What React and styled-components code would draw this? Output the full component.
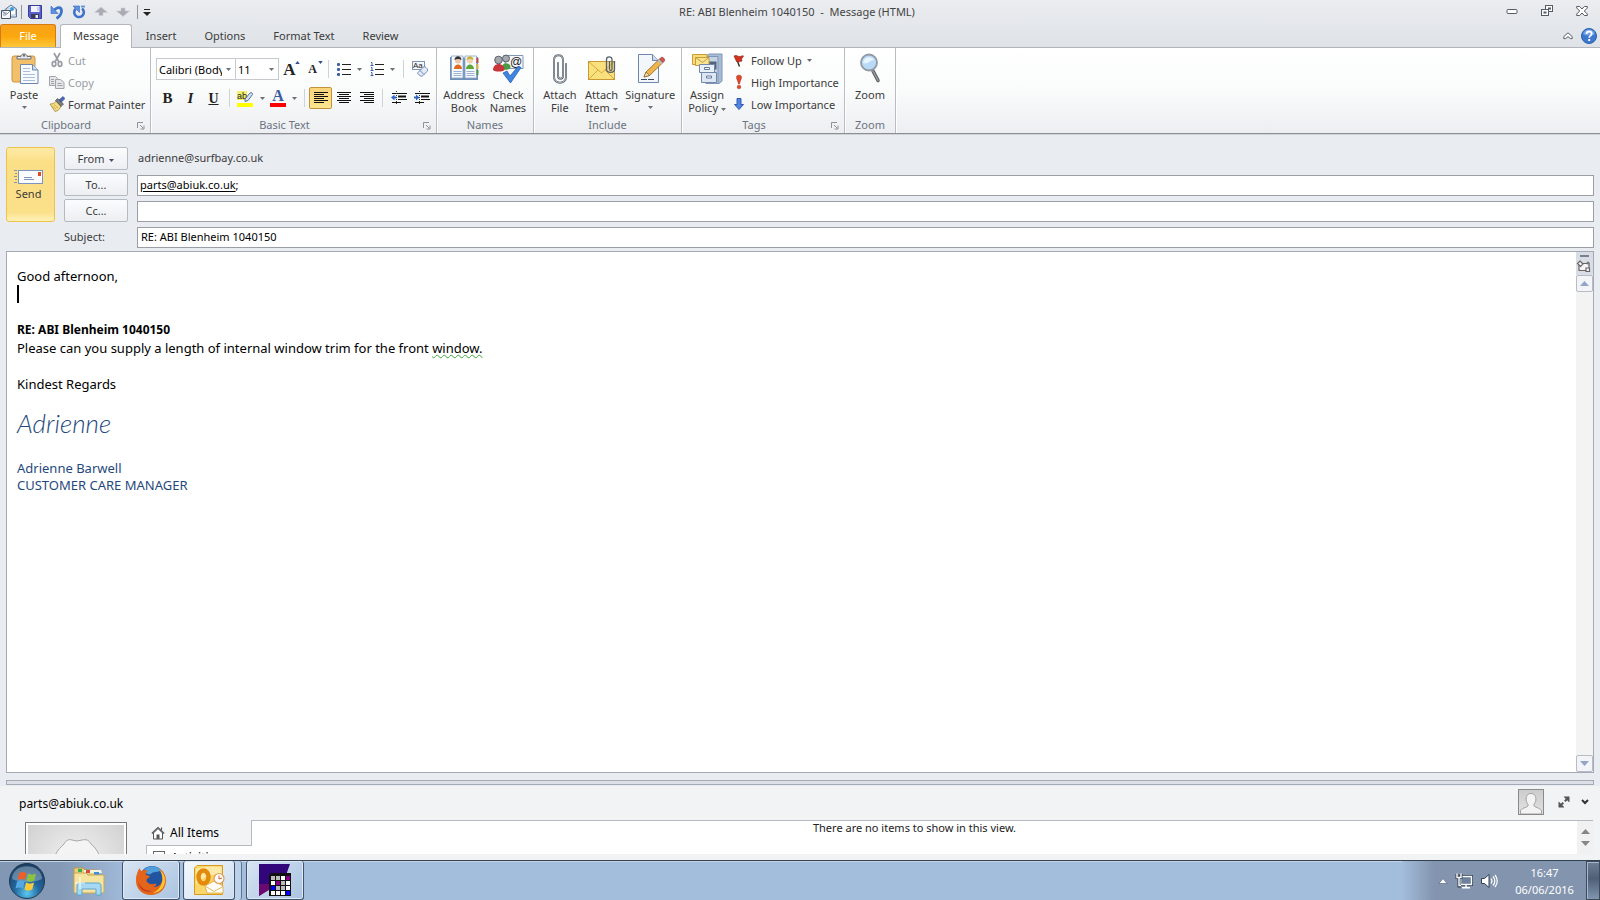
import React from "react";
import styled, { createGlobalStyle } from "styled-components";

export default function App() {
  return (
    <>
      <GlobalStyle />
      <Window>
        <TitleBar />
        <Tabs />
        <Ribbon />
        <MessageHeader />
        <MessageBody />
        <Splitter />
        <PeoplePane />
        <Taskbar />
      </Window>
    </>
  );
}

/* ---------- title bar ---------- */

function TitleBar() {
  return (
    <StyledTitleBar>
      <QuickAccess>
        <QuickButton aria-label="Message menu">
          <MailIcon />
        </QuickButton>
        <QuickDivider />
        <QuickButton aria-label="Save">
          <SaveIcon />
        </QuickButton>
        <QuickButton aria-label="Undo">
          <UndoIcon />
        </QuickButton>
        <QuickButton aria-label="Repeat">
          <RepeatIcon />
        </QuickButton>
        <QuickButton aria-label="Previous item">
          <NavArrowIcon />
        </QuickButton>
        <QuickButton aria-label="Next item">
          <NavArrowIcon down />
        </QuickButton>
        <QuickDivider />
        <QuickButton aria-label="Customise" $narrow>
          <svg width="8" height="8" viewBox="0 0 8 8">
            <path d="M1 1.500h6" stroke="#222" />
            <path d="M0 4h8L4 8z" fill="#222" />
          </svg>
        </QuickButton>
      </QuickAccess>
      <WindowTitle>RE: ABI Blenheim 1040150&nbsp; -&nbsp; Message (HTML)</WindowTitle>
      <WindowControls>
        <WindowButton aria-label="Minimise">
          <svg width="12" height="12" viewBox="0 0 12 12">
            <rect x="1" y="4.500" width="10" height="4" rx="1" fill="#fff" stroke="#565b6b" />
          </svg>
        </WindowButton>
        <WindowButton aria-label="Restore">
          <svg width="12" height="12" viewBox="0 0 12 12" fill="#fff" stroke="#565b6b">
            <rect x="4.500" y=".5" width="7" height="6" />
            <rect x="7.500" y="3" width="2" height="1" />
            <rect x=".5" y="4.500" width="7" height="6" />
            <rect x="3" y="7" width="2" height="1" />
          </svg>
        </WindowButton>
        <WindowButton aria-label="Close">
          <svg width="12" height="12" viewBox="0 0 12 12" strokeLinejoin="round">
            <path
              d="M.7 1.500h3L6 4l2.300-2.500h3v1.500L8.300 6l3 3v1.500h-3L6 8l-2.300 2.500h-3V9l3-3-3-3z"
              fill="#fff"
              stroke="#565b6b"
            />
          </svg>
        </WindowButton>
      </WindowControls>
    </StyledTitleBar>
  );
}

function Tabs() {
  return (
    <StyledTabs>
      <FileTab>File</FileTab>
      <Tab $active>Message</Tab>
      <Tab>Insert</Tab>
      <Tab>Options</Tab>
      <Tab>Format Text</Tab>
      <Tab>Review</Tab>
      <TabTools>
        <ToolLink aria-label="Collapse ribbon">
          <svg width="10" height="8" viewBox="0 0 10 8">
            <path
              d="M5 .8L9.200 4.600v2h-1.800L5 4.600 2.600 6.600H.8v-2z"
              fill="#fff"
              stroke="#565b6b"
              strokeLinejoin="round"
            />
          </svg>
        </ToolLink>
        <ToolLink aria-label="Help">
          <svg width="16" height="16" viewBox="0 0 16 16">
            <circle cx="8" cy="8" r="7.500" fill="#3d78cf" stroke="#2c5fae" />
            <path d="M2 6a6.300 6.300 0 0 1 12 0c-3 2-9 2-12 0z" fill="#6fa2e6" />
            <path
              d="M5.500 6c0-3.400 5.200-3.200 5.200-.2 0 1.700-2.500 1.900-2.500 3.900"
              fill="none"
              stroke="#fff"
              strokeWidth="1.800"
            />
            <rect x="7.200" y="11" width="2" height="2" fill="#fff" />
          </svg>
        </ToolLink>
      </TabTools>
    </StyledTabs>
  );
}

/* ---------- ribbon ---------- */

function Ribbon() {
  return (
    <StyledRibbon>
      <Group label="Clipboard" width={151} launcher>
        <BigButton $width={48}>
          <PasteIcon />
          <BigLabel>Paste</BigLabel>
          <Caret />
        </BigButton>
        <SmallColumn>
          <SmallButton disabled>
            <CutIcon />
            Cut
          </SmallButton>
          <SmallButton disabled>
            <CopyIcon />
            Copy
          </SmallButton>
          <SmallButton>
            <BrushIcon />
            Format Painter
          </SmallButton>
        </SmallColumn>
      </Group>

      <Group label="Basic Text" width={286} launcher>
        <TextTools>
          <ToolRow>
            <ComboBox $width={80}>
              <select aria-label="Font" defaultValue="body">
                <option value="body">Calibri (Body)</option>
              </select>
              <Caret />
            </ComboBox>
            <ComboBox $width={44}>
              <select aria-label="Font size" defaultValue="11">
                <option value="11">11</option>
              </select>
              <Caret />
            </ComboBox>
            <Tool aria-label="Grow font">
              <Letter $size={17}>A</Letter>
              <SizeMark />
            </Tool>
            <Tool aria-label="Shrink font">
              <Letter $size={12}>A</Letter>
              <SizeMark down />
            </Tool>
            <ToolDivider />
            <Tool aria-label="Bullets" $split>
              <ListIcon />
              <Caret />
            </Tool>
            <Tool aria-label="Numbering" $split>
              <ListIcon numbered />
              <Caret />
            </Tool>
            <ToolDivider />
            <Tool aria-label="Clear formatting">
              <ClearIcon />
            </Tool>
          </ToolRow>
          <ToolRow>
            <Tool aria-label="Bold">
              <Letter $size={15}>B</Letter>
            </Tool>
            <Tool aria-label="Italic">
              <Letter $size={15} $italic>
                I
              </Letter>
            </Tool>
            <Tool aria-label="Underline">
              <Letter $size={14} $underline>
                U
              </Letter>
            </Tool>
            <ToolDivider />
            <Tool aria-label="Highlight" $split>
              <HighlightIcon />
              <Caret />
            </Tool>
            <Tool aria-label="Font colour" $split>
              <FontColour>
                <Letter $size={16} $blue>
                  A
                </Letter>
              </FontColour>
              <Caret />
            </Tool>
            <ToolDivider />
            <Tool aria-label="Align left" $pressed>
              <AlignIcon align="left" />
            </Tool>
            <Tool aria-label="Centre">
              <AlignIcon align="center" />
            </Tool>
            <Tool aria-label="Align right">
              <AlignIcon align="right" />
            </Tool>
            <ToolDivider />
            <Tool aria-label="Decrease indent">
              <IndentIcon />
            </Tool>
            <Tool aria-label="Increase indent">
              <IndentIcon increase />
            </Tool>
          </ToolRow>
        </TextTools>
      </Group>

      <Group label="Names" width={97}>
        <BigButton $width={44}>
          <AddressBookIcon />
          <BigLabel>Address Book</BigLabel>
        </BigButton>
        <BigButton $width={44}>
          <CheckNamesIcon />
          <BigLabel>Check Names</BigLabel>
        </BigButton>
      </Group>

      <Group label="Include" width={148}>
        <BigButton $width={42}>
          <PaperclipIcon />
          <BigLabel>Attach File</BigLabel>
        </BigButton>
        <BigButton $width={42}>
          <AttachItemIcon />
          <BigLabel>
            Attach Item <Caret />
          </BigLabel>
        </BigButton>
        <BigButton $width={56}>
          <SignatureIcon />
          <BigLabel>Signature</BigLabel>
          <Caret />
        </BigButton>
      </Group>

      <Group label="Tags" width={163} launcher>
        <BigButton $width={46}>
          <PolicyIcon />
          <BigLabel>
            Assign Policy <Caret />
          </BigLabel>
        </BigButton>
        <SmallColumn>
          <SmallButton>
            <FlagIcon />
            Follow Up <Caret />
          </SmallButton>
          <SmallButton>
            <HighIcon />
            High Importance
          </SmallButton>
          <SmallButton>
            <LowIcon />
            Low Importance
          </SmallButton>
        </SmallColumn>
      </Group>

      <Group label="Zoom" width={51}>
        <BigButton $width={46}>
          <MagnifierIcon />
          <BigLabel>Zoom</BigLabel>
        </BigButton>
      </Group>
    </StyledRibbon>
  );
}

function Group({ label, width, launcher, children }) {
  return (
    <StyledGroup $width={width}>
      <GroupContent>{children}</GroupContent>
      <GroupFooter>
        <GroupLabel>{label}</GroupLabel>
        {launcher && (
          <Launcher aria-label={`${label} options`}>
            <svg width="8" height="8" viewBox="0 0 8 8" fill="none" stroke="#8d939c">
              <path d="M.5 6V.5H6M3 3l3.500 3.500M7 3.500V7H3.500" />
            </svg>
          </Launcher>
        )}
      </GroupFooter>
    </StyledGroup>
  );
}

/* ---------- message ---------- */

function MessageHeader() {
  return (
    <StyledHeader>
      <SendButton>
        <SendIcon />
        Send
      </SendButton>
      <Fields>
        <FieldButton>
          From <Caret />
        </FieldButton>
        <FromAddress>adrienne@surfbay.co.uk</FromAddress>

        <FieldButton>To...</FieldButton>
        <RecipientBox>
          <a href="mailto:parts@abiuk.co.uk">parts@abiuk.co.uk</a>;
          <input aria-label="To" />
        </RecipientBox>

        <FieldButton>Cc...</FieldButton>
        <RecipientBox>
          <input aria-label="Cc" />
        </RecipientBox>

        <SubjectLabel htmlFor="subject">Subject:</SubjectLabel>
        <SubjectInput id="subject" defaultValue="RE: ABI Blenheim 1040150" />
      </Fields>
    </StyledHeader>
  );
}

function MessageBody() {
  return (
    <StyledBody>
      <Letterhead>
        <p>Good afternoon,</p>
        <p>
          <TextCursor />
        </p>
        <p>&nbsp;</p>
        <Heading>RE: ABI Blenheim 1040150</Heading>
        <p>
          Please can you supply a length of internal window trim for the front <Grammar>window.</Grammar>
        </p>
        <p>&nbsp;</p>
        <p>Kindest Regards</p>
        <Autograph>Adrienne</Autograph>
        <Signatory>
          Adrienne Barwell
          <br />
          CUSTOMER CARE MANAGER
        </Signatory>
      </Letterhead>
      <Scrollbar>
        <RulerToggle aria-label="Select browse object">
          <svg width="16" height="20" viewBox="0 0 16 20">
            <rect x="4" y="1" width="9" height="2" fill="#7b828c" />
            <g fill="#f8f4f8" stroke="#666" strokeWidth="1.200">
              <path d="M3 9.500h10v7H3z" />
              <path d="M4 7l3 3-2.500 2.500-3-3zM10 14h3.500v3.500H10z" />
            </g>
            <circle cx="12" cy="9" r="1.500" fill="#777" />
          </svg>
        </RulerToggle>
        <ScrollButton aria-label="Scroll up">
          <Triangle up />
        </ScrollButton>
        <ScrollTrack />
        <ScrollButton aria-label="Scroll down">
          <Triangle />
        </ScrollButton>
      </Scrollbar>
    </StyledBody>
  );
}

function PeoplePane() {
  return (
    <StyledPeople>
      <PeopleBar>
        <PeopleName>parts@abiuk.co.uk</PeopleName>
        <Avatar aria-label="Contact">
          <svg width="24" height="24" viewBox="0 0 24 24">
            <path
              d="M1.500 24v-3c0-2.500 6-3.500 7.500-5v-2C6.500 12 7 8 7.500 6.500c1.500-4 7.500-4 9 0 .5 1.500 1 5.500-1.500 7.500v2c1.500 1.500 7.500 2.500 7.500 5v3z"
              fill="#f3f3f3"
              stroke="#a2a2a2"
            />
          </svg>
        </Avatar>
        <ToolLink aria-label="Open people pane">
          <svg width="12" height="12" viewBox="0 0 12 12" fill="#555" stroke="#555">
            <path d="M6 .8h5.200V6zM.8 6v5.200H6z" strokeWidth=".5" />
            <path d="M2.500 9.500l2.800-2.800M6.800 5.200l2.700-2.700" strokeWidth="2" />
          </svg>
        </ToolLink>
        <ToolLink aria-label="Collapse people pane">
          <svg width="8" height="8" viewBox="0 0 8 8">
            <path d="M1 2l3 3 3-3" fill="none" stroke="#333" strokeWidth="2" />
          </svg>
        </ToolLink>
      </PeopleBar>
      <PeopleContent>
        <PhotoColumn>
          <Photo>
            <svg width="96" height="96" viewBox="0 0 96 96">
              <path
                d="M24 42c1-10 5-17 12-23 2-4 5-5 8-4l5 1 5-1c4-1 7 0 9 4 6 5 9 10 11 23v50H24z"
                fill="#f4f4f4"
                stroke="#a8a8a8"
              />
            </svg>
          </Photo>
        </PhotoColumn>
        <PeopleTabs>
          <PeopleTab $active>
            <HomeIcon />
            All Items
          </PeopleTab>
          <PeopleTab>
            <svg width="14" height="14" viewBox="0 0 14 14">
              <rect x="1.500" y="1.500" width="11" height="11" fill="#fff" stroke="#666" />
            </svg>
            Activities
          </PeopleTab>
        </PeopleTabs>
        <PeopleItems>There are no items to show in this view.</PeopleItems>
        <PeopleScroll>
          <Triangle up grey />
          <Triangle grey />
        </PeopleScroll>
      </PeopleContent>
    </StyledPeople>
  );
}

/* ---------- taskbar ---------- */

function Taskbar() {
  return (
    <StyledTaskbar>
      <StartButton aria-label="Start">
        <StartIcon />
      </StartButton>
      <TaskButton aria-label="Explorer">
        <FolderIcon />
      </TaskButton>
      <TaskButton aria-label="Firefox" $open>
        <FirefoxIcon />
      </TaskButton>
      <TaskStack>
        <TaskButton aria-label="Outlook" $open $active>
          <OutlookIcon />
        </TaskButton>
      </TaskStack>
      <TaskButton aria-label="Program" $open>
        <GridAppIcon />
      </TaskButton>
      <Tray>
        <svg width="10" height="6" viewBox="0 0 10 6">
          <path d="M5 .5L9 5.500H1z" fill="#fff" stroke="#4d5c72" strokeWidth=".6" />
        </svg>
        <NetworkIcon />
        <SpeakerIcon />
        <Clock>
          <time>16:47</time>
          <span>06/06/2016</span>
        </Clock>
      </Tray>
      <ShowDesktop aria-label="Show desktop" />
    </StyledTaskbar>
  );
}

/* ---------- icons ---------- */

function Caret() {
  return (
    <StyledCaret width="5" height="3" viewBox="0 0 5 3">
      <path d="M0 0h5L2.500 3z" fill="currentColor" />
    </StyledCaret>
  );
}

function SizeMark({ down }) {
  return (
    <StyledSizeMark width="5" height="3" viewBox="0 0 6 4">
      <path d={down ? "M0 0h6L3 4z" : "M0 4h6L3 0z"} fill="#2f4f8f" />
    </StyledSizeMark>
  );
}

function Triangle({ up, grey }) {
  return (
    <svg width="9" height="5" viewBox="0 0 9 5">
      <path d={up ? "M0 5h9L4.500 0z" : "M0 0h9L4.500 5z"} fill={grey ? "#868686" : "#94a3c8"} />
    </svg>
  );
}

function MailIcon() {
  return (
    <svg width="16" height="16" viewBox="0 0 16 16" strokeLinejoin="round">
      <path d="M4 5.500L10 1l5.500 4v8H5z" fill="#e4ecf6" stroke="#5b7396" />
      <path d="M5.500 5h9v6h-9z" fill="#fff" stroke="#8ba0bd" strokeWidth=".6" />
      <circle cx="11" cy="5" r="2" fill="#3d9bd8" />
      <path d="M.5 6.500h9v8h-9z" fill="#f4f7fb" stroke="#47566d" />
      <path d="M2 9h4M2 11h3M.5 6.500l5 4 4-4" fill="none" stroke="#6e7f97" strokeWidth=".8" />
    </svg>
  );
}

function SaveIcon() {
  return (
    <svg width="16" height="16" viewBox="0 0 16 16">
      <path d="M1.500 1.500h13v13h-11l-2-2z" fill="#5a5fd0" stroke="#3a3c96" />
      <path d="M4 2h8.500v6H4z" fill="#f1f4fc" />
      <path d="M10 3h2v4h-2z" fill="#c8d2ee" />
      <path d="M4 10h8v4H4z" fill="#3b3f55" />
      <path d="M8.500 11h2.500v3H8.500z" fill="#eee" />
    </svg>
  );
}

function UndoIcon() {
  return (
    <svg width="16" height="16" viewBox="0 0 16 16">
      <path d="M5 6.500C8 2.500 12.500 2.500 12.500 7c0 3-2 5.500-5 7.500" fill="none" stroke="#3e73cc" strokeWidth="2.800" />
      <path d="M2 2v7.500h7z" fill="#5e92e0" stroke="#3568be" strokeWidth=".6" />
    </svg>
  );
}

function RepeatIcon() {
  return (
    <svg width="16" height="16" viewBox="0 0 16 16">
      <path d="M11 4.500a4.800 4.800 0 1 1-6.500.5" fill="none" stroke="#3e73cc" strokeWidth="2.600" />
      <path d="M2 2h6.500v6.500z" fill="#5e92e0" stroke="#3568be" strokeWidth=".6" />
      <path d="M10 2.500h4" stroke="#5e92e0" strokeWidth="1.800" />
    </svg>
  );
}

function NavArrowIcon({ down }) {
  return (
    <svg width="14" height="12" viewBox="0 0 14 12">
      <path
        d={down ? "M5 2h4v3h4.500L7 10.500.5 5H5z" : "M7 1l6.500 5.500H9v3H5v-3H.5z"}
        fill="#a9adb3"
        stroke="#c9ccd1"
        strokeWidth=".6"
      />
    </svg>
  );
}

function PasteIcon() {
  return (
    <svg width="32" height="32" viewBox="0 0 32 32">
      <rect x="4" y="3" width="23" height="26" rx="2" fill="#f2c06a" stroke="#c9964a" />
      <path d="M9 6V3.500h4c0-3.500 6-3.500 6 0h4V6z" fill="#e6e9ee" stroke="#6b7079" />
      <circle cx="16" cy="2.500" r="1.200" fill="#6b7079" />
      <path d="M12.500 11.500h12l5.500 5.500v13.500H12.500z" fill="#f7fafe" stroke="#6d86ad" />
      <path d="M24.500 11.500V17H30" fill="#cfdcef" stroke="#6d86ad" />
      <path d="M15 15.500h7M15 18.500h7M15 21.500h12M15 24.500h12M15 27.500h12" stroke="#a9bddb" />
    </svg>
  );
}

function CutIcon() {
  return (
    <svg width="16" height="16" viewBox="0 0 16 16" fill="none" stroke="#999da3">
      <path d="M5 1l5 9M11 1L6 10" strokeWidth="1.700" />
      <ellipse cx="5" cy="12" rx="1.800" ry="2.300" strokeWidth="1.700" />
      <ellipse cx="11" cy="12" rx="1.800" ry="2.300" strokeWidth="1.700" />
    </svg>
  );
}

function CopyIcon() {
  return (
    <svg width="16" height="16" viewBox="0 0 16 16" fill="#e4e6e9" stroke="#a0a4aa">
      <path d="M.5 2.500h6l2 2v7h-8z" />
      <path d="M6.500 5.500h5l3.500 3v6H6.500z" />
      <path d="M2 5.500h3M2 7.500h3M2 9.500h3M8.500 9.500h4M8.500 11.500h5" />
    </svg>
  );
}

function BrushIcon() {
  return (
    <svg width="16" height="16" viewBox="0 0 16 16">
      <path d="M1 8c3 0 5-1 6-3l5 5c-1 3-3 5-6 5.500z" fill="#f3dc84" stroke="#a98c3a" strokeWidth=".8" />
      <path d="M3 10l4 3M5 8.500l4 3.500" stroke="#c5a445" strokeWidth=".8" />
      <path d="M6.500 4.500l2-2 6 5.500-2.500 2.500z" fill="#7c7c80" stroke="#4b4b50" strokeWidth=".7" />
      <path d="M10 4l4-3.500 2 2L12.500 6z" fill="#4a67b5" stroke="#2f4788" strokeWidth=".6" />
    </svg>
  );
}

function ListIcon({ numbered }) {
  return (
    <svg width="14" height="14" viewBox="0 0 14 14">
      {[1, 6, 11].map((y) => (
        <React.Fragment key={y}>
          {numbered ? (
            <path d={`M1 ${y - 0.5}h1v2.500M.5 ${y + 2.5}h3`} fill="none" stroke="#3c5fa8" />
          ) : (
            <rect x="0" y={y} width="3" height="3" rx="1" fill="#3c5fa8" />
          )}
          <rect x="5" y={y + 1} width="9" height="1" fill="#222" />
        </React.Fragment>
      ))}
    </svg>
  );
}

function ClearIcon() {
  return (
    <svg width="18" height="18" viewBox="0 0 18 18">
      <rect x="1.500" y="1.500" width="12" height="8" fill="#f5f8fc" stroke="#7d94b8" />
      <text x="2" y="8" fontSize="8" fontFamily="Liberation Sans" fill="#222">
        Aa
      </text>
      <path
        d="M7 12.500l5-5c1-1 2-1 3 0l1 1c.8.8.8 2 0 3l-4 4c-1 1-2 1-3 0l-1.500-1c-1-.6-1-1.300-.5-2z"
        fill="#e3ebf7"
        stroke="#6f88b4"
      />
      <path d="M9 10.500l4 4" stroke="#6f88b4" />
    </svg>
  );
}

function HighlightIcon() {
  return (
    <svg width="17" height="17" viewBox="0 0 17 17">
      <rect x="0" y="1" width="10" height="9" fill="#f4ee6a" />
      <text x="0" y="9" fontSize="9" fontFamily="Liberation Sans" fill="#222">
        ab
      </text>
      <path d="M8 9l5-6c1-1 3 0 2.500 1.500L11 10.500l-3 1z" fill="#d5e1f2" stroke="#47638f" strokeWidth=".9" />
      <rect x="0" y="13" width="16" height="4" fill="#ff0" />
    </svg>
  );
}

function AlignIcon({ align }) {
  const widths = [14, 10, 14, 10, 14, 10];
  return (
    <svg width="14" height="12" viewBox="0 0 14 12" fill="#111">
      {widths.map((w, i) => {
        const x = { left: 0, center: (14 - w) / 2, right: 14 - w }[align];
        return <rect key={i} x={x} y={i * 2} width={w} height="1" />;
      })}
    </svg>
  );
}

function IndentIcon({ increase }) {
  return (
    <svg width="16" height="14" viewBox="0 0 16 14">
      <path d="M1 2.500h15M7 8.500h9M1 11.500h9" stroke="#111" />
      <path d="M7 5.500h8" stroke="#111" strokeWidth="2" />
      <path d="M5.500 0v14" stroke="#333" strokeDasharray="1 1" />
      <path
        d={increase ? "M5.500 6.500L2 3.500v2H0v2h2v2z" : "M0 6.500l3.500-3v2h2v2h-2v2z"}
        fill="#2f66c8"
      />
    </svg>
  );
}

function AddressBookIcon() {
  return (
    <svg width="32" height="32" viewBox="0 0 32 32">
      <path d="M2 4h13l1 1 1-1h13v23H2z" fill="#6f8fb8" />
      <path d="M3.500 3H15v22H3.500zM17 3h11.500v22H17z" fill="#f6f9fd" stroke="#8ca5c7" strokeWidth=".8" />
      <path d="M28.500 5h2v5h-2z" fill="#c9473c" />
      <path d="M28.500 11h2v5h-2z" fill="#e7b13d" />
      <path d="M28.500 17h2v5h-2z" fill="#4d9a50" />
      <circle cx="10" cy="7.500" r="3" fill="#edc9a8" />
      <path d="M6.500 7c0-5 7-5 7 0-2-1.500-5-1.500-7 0z" fill="#333" />
      <path d="M6 16c0-6 8-6 8 0z" fill="#df6a1d" />
      <circle cx="22" cy="7.500" r="3" fill="#f1d2ae" />
      <path d="M18.500 7c0-5 7-5 7 0-2-1.500-5-1.500-7 0z" fill="#c9b23d" />
      <path d="M18 16c0-6 8-6 8 0z" fill="#5ea63a" />
      <path d="M5.500 18.500h8M5.500 20.500h8M5.500 22.500h8M18.500 18.500h8M18.500 20.500h8M18.500 22.500h8" stroke="#9db2cf" />
    </svg>
  );
}

function CheckNamesIcon() {
  return (
    <svg width="32" height="32" viewBox="0 0 32 32">
      <path d="M12 2.500h19v13H14z" fill="#f4f7fb" stroke="#8398b8" />
      <text x="18" y="12.500" fontSize="12" fontFamily="Liberation Sans" fill="#222">
        @
      </text>
      <path d="M9.500 16c0-8 9-7 9-1.500 0 2-6 3-9 1.500z" fill="#4b9a45" />
      <circle cx="14" cy="5.500" r="3.500" fill="#a4a8af" stroke="#5c6068" />
      <path d="M1 17c0-8 11.500-8 11.500 0-2 2-9.500 2-11.500 0z" fill="#c8353a" />
      <circle cx="6.500" cy="7" r="3.800" fill="#a4a8af" stroke="#5c6068" />
      <path d="M11 20l4-2 3 5 8-9.500 3 1L18.500 30z" fill="#3f86e0" stroke="#2460b4" strokeWidth=".8" />
    </svg>
  );
}

function PaperclipIcon() {
  return (
    <svg width="32" height="32" viewBox="0 0 32 32" fill="none" strokeLinecap="round">
      <path
        d="M14 10v13c0 3.500 5 3.500 5 0V7c0-6.500-9-6.500-9 0v17c0 7.500 12 7.500 12 0V11"
        stroke="#5d6670"
        strokeWidth="2"
      />
      <path
        d="M14 10v13c0 3.500 5 3.500 5 0V7c0-6.500-9-6.500-9 0v17c0 7.500 12 7.500 12 0V11"
        stroke="#c4cbd3"
        strokeWidth=".7"
      />
    </svg>
  );
}

function AttachItemIcon() {
  return (
    <svg width="32" height="32" viewBox="0 0 32 32" fill="none">
      <rect x="2.500" y="8.500" width="26" height="18" fill="#fbe07e" stroke="#c79a33" />
      <path d="M3 26l9-9M28 26l-9-9M3 9l12.500 11L28 9" stroke="#d6a83c" />
      <path d="M23.500 8v8c0 2 2.500 2 2.500 0V6.500c0-3.500-5.500-3.500-5.500 0V16c0 4.500 8 4.500 8 0V8" stroke="#54606e" strokeWidth="1.300" />
    </svg>
  );
}

function SignatureIcon() {
  return (
    <svg width="32" height="32" viewBox="0 0 32 32">
      <path d="M4.500 1.500h14l6 6v22h-20z" fill="#f3f7fc" stroke="#6f87ac" />
      <path d="M18.500 1.500v6h6" fill="#cddaec" stroke="#6f87ac" />
      <path d="M7 26.500h14" stroke="#3c4b66" strokeDasharray="6 1" />
      <path d="M12 19L25.500 6l3.500 3.500L15.500 22.500 10 24z" fill="#efb54c" stroke="#8f6420" strokeWidth=".8" />
      <path d="M12 19l3.500 3.500L10 24z" fill="#f6dfb8" stroke="#6b4c20" strokeWidth=".6" />
      <path d="M23.500 8l2-2 3.500 3.500-2 2z" fill="#b8bcc2" />
      <path d="M25.500 6l1.500-1.500c1.500-1 4.500 1.500 3.500 3.500L29 9.500z" fill="#d2564f" stroke="#8d2d28" strokeWidth=".6" />
    </svg>
  );
}

function PolicyIcon() {
  return (
    <svg width="32" height="32" viewBox="0 0 32 32">
      <path d="M15 3l3-2h13v27l-3 2.500H15z" fill="#a9bcd5" stroke="#7e95b5" />
      <path d="M15 3.500h12v27H15z" fill="#c5d3e4" stroke="#7e95b5" />
      <path d="M17.500 8.500h8v8h-8z" fill="#51657f" />
      <path d="M1.500 1.500H16v10H1.500z" fill="#f8dd78" stroke="#c89d37" />
      <path d="M4.500 4.500H18v8H4.500z" fill="#fbe591" stroke="#c89d37" />
      <path d="M4.500 4.500l7 5 6.500-5" fill="none" stroke="#c89d37" />
      <path d="M8.500 11.500h15v8h-15z" fill="#e9f0f8" stroke="#7188aa" />
      <path d="M10.500 19.500h15v10h-15z" fill="#dde7f3" stroke="#7188aa" />
      <path d="M13.500 14.500h5v2h-5zM15.500 23h5v2h-5z" fill="#fff" stroke="#63789a" />
    </svg>
  );
}

function FlagIcon() {
  return (
    <svg width="14" height="16" viewBox="0 0 14 16">
      <path d="M3.500 4l4 10.500" stroke="#44352a" strokeWidth="1.500" />
      <path d="M2 4c3-1.500 4 1 6 .5 2-.3 2-1 3.500-.5l-2 3 .5 2c-2 .5-3 1.500-5.500.5z" fill="#d2331f" stroke="#8b1e14" strokeWidth=".6" />
    </svg>
  );
}

function HighIcon() {
  return (
    <svg width="14" height="16" viewBox="0 0 14 16" fill="#e2462b" stroke="#a32a15" strokeWidth=".5">
      <path d="M4.500 3c0-2.500 5-2.500 5 0 0 2.500-1.500 4-2 7h-1c-.5-3-2-4.500-2-7z" />
      <circle cx="7" cy="13" r="1.800" />
    </svg>
  );
}

function LowIcon() {
  return (
    <svg width="14" height="16" viewBox="0 0 14 16">
      <path d="M5 2.500h4v6h2.500L7 13.500 2.500 8.500H5z" fill="#4f86e2" stroke="#234fa8" strokeWidth=".9" />
    </svg>
  );
}

function MagnifierIcon() {
  return (
    <svg width="32" height="32" viewBox="0 0 32 32">
      <path d="M19 18l5 9.500" stroke="#5f636a" strokeWidth="3.600" strokeLinecap="round" />
      <path d="M19 18l5 9.500" stroke="#9da1a8" strokeWidth="1.200" strokeLinecap="round" />
      <circle cx="15" cy="9.500" r="8" fill="#b9daf6" stroke="#9298a4" strokeWidth="1.800" />
      <path d="M9 10c1-7 9-7 11-3-4 0-6 5-11 3z" fill="#e9f5fe" />
    </svg>
  );
}

function SendIcon() {
  return (
    <svg width="30" height="16" viewBox="0 0 30 16">
      <path d="M0 2.500h3M1 5.500h2M0 8.500h3M1 11.500h2M0 14.500h3" stroke="#8b93a8" />
      <rect x="4.500" y="2.500" width="24" height="13" fill="#fbfcff" stroke="#7b93bd" />
      <rect x="24" y="4" width="3" height="4" fill="#e04a2c" />
      <path d="M10 9.500h8M10 11.500h10" stroke="#7f95ba" />
    </svg>
  );
}

function HomeIcon() {
  return (
    <svg width="14" height="14" viewBox="0 0 14 14">
      <path d="M2.500 7v6h9V7L7 2.500z" fill="#fff" stroke="#555" />
      <path d="M.8 7.500L7 1.500l6.200 6M10.500 4V1.500" fill="none" stroke="#555" strokeWidth="1.200" />
      <rect x="5.500" y="8.500" width="3" height="4.500" fill="#555" />
    </svg>
  );
}

function StartIcon() {
  return (
    <svg width="38" height="38" viewBox="0 0 38 38">
      <defs>
        <radialGradient id="orb" cx=".5" cy=".85" r=".8">
          <stop offset="0" stopColor="#5cc8f0" />
          <stop offset=".45" stopColor="#22689f" />
          <stop offset="1" stopColor="#1b3f66" />
        </radialGradient>
      </defs>
      <circle cx="19" cy="19" r="17.500" fill="url(#orb)" stroke="#22384f" />
      <path d="M4 17C4 0 34 0 34 17c-8 4-22 4-30 0z" fill="#fff" opacity=".3" />
      <path d="M11 11c3-1.500 5-1.500 7.500 0l-1.500 7c-2.500-1.500-4.500-1.500-7.500 0z" fill="#e8602c" />
      <path d="M20 11.500c3 1.500 5 1.500 8 0l-1.700 7c-2.800 1.500-5 1.500-7.800 0z" fill="#8cc33c" />
      <path d="M9 19.500c3-1.500 5-1.500 7.500 0l-1.500 7c-2.500-1.500-4.500-1.500-7.500 0z" fill="#56a8e4" />
      <path d="M18 20.500c3 1.500 5 1.500 8 0l-1.700 7c-2.800 1.500-5 1.500-7.800 0z" fill="#fbca3c" />
    </svg>
  );
}

function FolderIcon() {
  return (
    <svg width="34" height="32" viewBox="0 0 34 32">
      <path d="M2 3h9l2 2h12l1 20H2z" fill="#e9cf7c" stroke="#b79a48" />
      <path d="M6 4h4v3H6z" fill="#3fae49" />
      <path d="M12 5h17l1 3H12z" fill="#f6f2e2" />
      <path d="M14 5h4v3h-4z" fill="#d24b3c" />
      <path d="M2 8h12l2 2h16v16c0 1-1 2-2 2H3c-1 0-1-1-1-2z" fill="#f5e3a0" stroke="#c5a755" />
      <path d="M22 7h5v2.500h-5z" fill="#3b8fd8" />
      <path d="M5 30v-9c0-2 1-3 3-3h18c2 0 3 1 3 3v9h-5v-6H10v6z" fill="#a5d8f2" stroke="#5fa5cf" />
      <path d="M8 12v12M3 18h10" stroke="#fff" strokeWidth="1.200" opacity=".9" />
    </svg>
  );
}

function FirefoxIcon() {
  return (
    <svg width="32" height="32" viewBox="0 0 32 32">
      <circle cx="17" cy="14.500" r="12.500" fill="#22539f" />
      <path d="M9 6c4-5 13-5 17 0-3 3-8 1-10 4-3 1-5 0-7-4z" fill="#4f9fdb" />
      <path
        d="M2 10c.5-3 2-5 3-6 0 2 .5 2.500 1.500 3C9 5.500 11 6 13 7c-2 1-2.500 2.500-2 4l4 1c-.5 2-3 2-3.500 4 0 4 6 5 9 3.500 2 1 0 3-3 3 5 1.500 10-2 10-9 0-4-2-7-4-9 5 2 7.500 7 7.500 12 0 9-7 14.500-15 14.500C7.500 31 1 25 1 17c0-3 0-5 1-7z"
        fill="#e4641b"
      />
      <path d="M24 5c4 3 6 7 6 11 0 8-6 13-12 13 6-3 9-8 9.500-13 0-4-1-8-3.500-11z" fill="#fbc832" />
      <path d="M3 17c2 7 8 10 14 10-5 2-13 0-14-10z" fill="#c03a1a" />
    </svg>
  );
}

function OutlookIcon() {
  return (
    <svg width="32" height="32" viewBox="0 0 32 32">
      <path d="M4 1.500h25.500v29h-28V4z" fill="#fbd66b" stroke="#d89b1c" />
      <path d="M3 5c8-3 18-3 25.500-2v8C19 9 10 13 3 20z" fill="#fdeaa8" />
      <ellipse cx="10.500" cy="13" rx="5" ry="6.500" fill="none" stroke="#e28a0c" strokeWidth="4.500" />
      <path d="M12 22l9-5 9 5v7H14z" fill="#fffdf6" stroke="#dba53a" strokeWidth=".8" />
      <path d="M13 22.500l8 5 9-5" fill="none" stroke="#dba53a" strokeWidth=".8" />
      <circle cx="26" cy="14.500" r="5" fill="#fff" stroke="#df9c56" strokeWidth="1.200" />
      <path d="M26 11.500v3.500l3-1" fill="none" stroke="#d2622a" />
    </svg>
  );
}

function GridAppIcon() {
  const colours = ["#bbb", "#bbb", "#fff", "#808", "#fff", "#808", "#bbb", "#fff", "#00f", "#bbb", "#bbb", "#fff", "#fff", "#fff", "#fff", "#00f"];
  return (
    <svg width="32" height="32" viewBox="0 0 32 32">
      <path d="M0 0h31l-5 14L0 32z" fill="#30067a" />
      <path d="M0 20h20L0 32z" fill="#6a0a70" />
      <path d="M10 11l2-2h20v23H10z" fill="#111" />
      {colours.map((c, i) => (
        <rect key={i} x={12 + (i % 4) * 5} y={12 + Math.floor(i / 4) * 5} width="4" height="4" fill={c} />
      ))}
    </svg>
  );
}

function NetworkIcon() {
  return (
    <svg width="18" height="18" viewBox="0 0 18 18">
      <rect x="5.500" y="4.500" width="11" height="8" fill="#6e829d" stroke="#333f50" strokeWidth="3" />
      <rect x="5.500" y="4.500" width="11" height="8" fill="#6e829d" stroke="#fff" strokeWidth="1.400" />
      <path d="M11 13v2.500M7 15.700h8" stroke="#fff" strokeWidth="1.500" />
      <path d="M2 2v3.500h4V2M4 5.500V14h2" fill="none" stroke="#333f50" strokeWidth="3" />
      <path d="M2 1.500v4h4v-4M4 5.500v8h2" fill="none" stroke="#fff" strokeWidth="1.400" />
    </svg>
  );
}

function SpeakerIcon() {
  return (
    <svg width="18" height="16" viewBox="0 0 18 16">
      <path d="M1.500 5.500h3L9 1.500v13l-4.500-4h-3z" fill="#fff" stroke="#333f50" />
      <path d="M11 5.500c1.200 1.500 1.200 3.500 0 5M13 3.500c2.400 2.500 2.400 6.500 0 9M15 2c3 3.500 3 8.500 0 12" fill="none" stroke="#fff" strokeWidth="1.200" />
    </svg>
  );
}

/* ---------- styles ---------- */

const GlobalStyle = createGlobalStyle`
  * {
    box-sizing: border-box;
  }

  body {
    margin: 0;
    font-family: "Noto Sans", sans-serif;
    font-size: 11px;
    line-height: 13px;
    color: #3b3b3b;
  }

  button, input, select {
    font: inherit;
    color: inherit;
    margin: 0;
    padding: 0;
    border: 0;
    background: none;
  }

  svg {
    display: block;
    flex: none;
  }

  p {
    margin: 0;
  }
`;

const Window = styled.div`
  display: flex;
  flex-direction: column;
  min-height: 100vh;
  background: #e9ecf1;
`;

const StyledTitleBar = styled.header`
  display: grid;
  grid-template-columns: 1fr auto 1fr;
  align-items: center;
  height: 24px;
  background: linear-gradient(#ebedf0, #e4e7eb);
`;

const QuickAccess = styled.div`
  display: flex;
  align-items: center;
`;

const QuickButton = styled.button`
  display: flex;
  align-items: center;
  justify-content: center;
  width: ${({ $narrow }) => ($narrow ? "14px" : "22px")};
  height: 22px;

  &:first-child {
    width: 18px;
  }
`;

const QuickDivider = styled.span`
  width: 1px;
  height: 14px;
  margin: 0 2px 0 3px;
  background: #8f949b;
`;

const WindowTitle = styled.span`
  padding: 0 6px 2px 0;
  color: #444;
`;

const WindowControls = styled.div`
  display: flex;
  justify-content: flex-end;
  gap: 23px;
  padding: 0 12px 2px 0;
`;

const WindowButton = styled.button`
  display: flex;
`;

const StyledTabs = styled.nav`
  display: flex;
  align-items: stretch;
  height: 24px;
  border-bottom: 1px solid #b2b6bb;
  background: linear-gradient(#e4e7eb, #dfe3e7);
`;

const FileTab = styled.button`
  width: 56px;
  margin-right: 4px;
  padding-bottom: 2px;
  border: 1px solid #d87a12;
  border-bottom: 0;
  border-radius: 3px 3px 0 0;
  background: linear-gradient(#f7a21c, #fba70c 50%, #ffc83c);
  color: #fff;
`;

const Tab = styled.button`
  padding: 0 14px;

  ${({ $active }) =>
    $active &&
    `
    padding: 0 12px 2px;
    margin-bottom: -1px;
    border: 1px solid #b2b6bb;
    border-bottom: 0;
    border-radius: 3px 3px 0 0;
    background: #fff;
  `}
`;

const TabTools = styled.div`
  display: flex;
  align-items: center;
  gap: 8px;
  margin-left: auto;
  padding-right: 3px;
`;

const ToolLink = styled.button`
  display: flex;
`;

const StyledRibbon = styled.div`
  display: flex;
  height: 86px;
  border-bottom: 1px solid #8b9097;
  box-shadow: 0 1px 0 #cfd3d8;
  background: linear-gradient(#fff, #fafbfb 50%, #eceef1);
`;

const StyledGroup = styled.section`
  display: flex;
  flex-direction: column;
  flex: none;
  width: ${({ $width }) => $width}px;
  border-right: 1px solid #b9bdc3;
  box-shadow: 1px 0 0 #fff;
`;

const GroupContent = styled.div`
  display: flex;
  flex: 1;
  padding: 0 3px 0 5px;

  ${StyledGroup}:nth-child(n + 5) & {
    padding: 0 2px;
  }

  ${StyledGroup}:first-child & {
    padding: 0;
  }
`;

const GroupFooter = styled.div`
  display: flex;
  align-items: center;
  height: 17px;
  color: #6b7482;
`;

const GroupLabel = styled.span`
  flex: 1;
  text-align: center;
`;

const Launcher = styled.button`
  width: 18px;
  padding: 2px 0 0 5px;
`;

const StyledCaret = styled.svg`
  display: inline-block;
  vertical-align: middle;
  color: #6c6f75;
`;

const BigButton = styled.button`
  display: flex;
  flex-direction: column;
  align-items: center;
  width: ${({ $width }) => $width}px;
  padding-top: 5px;

  > ${StyledCaret} {
    margin-top: 5px;
  }
`;

const BigLabel = styled.span`
  margin-top: 3px;
  text-align: center;
`;

const SmallColumn = styled.div`
  display: flex;
  flex-direction: column;
  padding-top: 1px;
`;

const SmallButton = styled.button`
  display: flex;
  align-items: center;
  gap: 3px;
  height: 22px;
  padding-left: 1px;
  white-space: nowrap;

  &:disabled {
    color: #999da3;
  }

  ${StyledGroup}:nth-child(5) & {
    gap: 5px;
    padding-left: 2px;
  }
`;

const TextTools = styled.div`
  display: flex;
  flex-direction: column;
  gap: 5px;
  padding-top: 9px;
`;

const ToolRow = styled.div`
  display: flex;
  align-items: center;
  height: 24px;
`;

const ComboBox = styled.div`
  display: flex;
  align-items: center;
  width: ${({ $width }) => $width}px;
  height: 22px;
  margin-right: -1px;
  padding-right: 4px;
  border: 1px solid #c6c9ce;
  background: #fff;
  color: #000;

  select {
    appearance: none;
    flex: 1;
    min-width: 0;
    padding-left: 2px;
    margin-right: 4px;
    outline: 0;
  }
`;

const Tool = styled.button`
  position: relative;
  display: flex;
  align-items: center;
  justify-content: center;
  gap: ${({ $split }) => ($split ? "6px" : 0)};
  width: ${({ $split }) => ($split ? "33px" : "23px")};
  height: 22px;
  border: 1px solid ${({ $pressed }) => ($pressed ? "#c2923b" : "transparent")};
  border-radius: 2px;
  background: ${({ $pressed }) => ($pressed ? "linear-gradient(#fbd57a, #fde68f)" : "none")};
`;

const ToolDivider = styled.span`
  width: 1px;
  height: 18px;
  margin: 0 4px;
  background: #cfd2d8;
`;

const Letter = styled.span`
  font-family: "Liberation Serif", serif;
  font-size: ${({ $size }) => $size}px;
  font-weight: bold;
  font-style: ${({ $italic }) => ($italic ? "italic" : "normal")};
  text-decoration: ${({ $underline }) => ($underline ? "underline" : "none")};
  color: ${({ $blue }) => ($blue ? "#3a5ba0" : "#222")};
`;

const FontColour = styled.span`
  width: 16px;
  padding-top: 1px;
  border-bottom: 4px solid #f00;
  line-height: 12px;
`;

const StyledSizeMark = styled.svg`
  position: absolute;
  right: 0;
  top: 2px;
`;

const StyledHeader = styled.section`
  display: flex;
  align-items: flex-start;
  gap: 9px;
  padding: 13px 6px 3px;
`;

const SendButton = styled.button`
  display: flex;
  flex-direction: column;
  align-items: center;
  gap: 3px;
  width: 49px;
  height: 75px;
  padding: 20px 4px 0 0;
  border: 1px solid #efc24a;
  border-radius: 3px;
  background: linear-gradient(#fdeaa6, #fbdf86 20%, #fbe08a 88%, #fff2b8);
`;

const Fields = styled.div`
  flex: 1;
  display: grid;
  grid-template-columns: 64px 1fr;
  grid-auto-rows: 23px;
  gap: 3px 9px;
`;

const FieldButton = styled.button`
  border: 1px solid #b5b9c0;
  border-radius: 2px;
  background: linear-gradient(#fbfcfd, #eceef2);

  ${StyledCaret} {
    margin-left: 2px;
    color: #444c66;
  }
`;

const FromAddress = styled.span`
  align-self: center;
  padding: 0 0 2px 1px;
`;

const RecipientBox = styled.div`
  display: flex;
  align-items: center;
  align-self: end;
  height: 21px;
  padding: 0 0 2px 2px;
  border: 1px solid #9a9ea6;
  background: #fff;
  color: #000;

  a {
    color: inherit;
    text-underline-offset: 2px;
  }

  input {
    flex: 1;
    outline: 0;
  }
`;

const SubjectLabel = styled.label`
  align-self: center;
`;

const SubjectInput = styled.input`
  align-self: end;
  height: 21px;
  padding: 0 0 2px 3px;
  border: 1px solid #9a9ea6;
  background: #fff;
  color: #000;
`;

const StyledBody = styled.main`
  flex: 1;
  display: flex;
  margin: 0 6px;
  border: 1px solid #a3a9b5;
  background: #fff;
`;

const Letterhead = styled.article`
  flex: 1;
  padding: 15px 10px;
  font-size: 13px;
  line-height: 18px;
  color: #000;
`;

const TextCursor = styled.span`
  display: block;
  width: 2px;
  height: 18px;
  background: #000;
`;

const Heading = styled.p`
  font-size: 12px;
  font-weight: bold;
`;

const Grammar = styled.span`
  text-decoration: underline wavy #3da63d 1px;
  text-underline-offset: 1px;
`;

const Autograph = styled.p`
  margin: 15px 0 22px;
  font-family: "Bradley Hand ITC", Lato, sans-serif;
  font-size: 26px;
  font-style: italic;
  font-weight: 300;
  line-height: 30px;
  color: #1f497d;
`;

const Signatory = styled.p`
  line-height: 17px;
  color: #1f497d;
`;

const Scrollbar = styled.div`
  display: flex;
  flex-direction: column;
  width: 17px;
  background: #f3f3f4;
`;

const RulerToggle = styled.button`
  height: 23px;
  background: #d9dee6;
`;

const ScrollButton = styled.button`
  display: flex;
  align-items: center;
  justify-content: center;
  height: 17px;
  border: 1px solid #b7bcc6;
  border-radius: 2px;
  background: #f2f4f7;
`;

const ScrollTrack = styled.div`
  flex: 1;
`;

const Splitter = styled.div`
  height: 5px;
  margin: 7px 6px 1px;
  border: 1px solid #a3a9b5;
  background: #dde1e7;
`;

const StyledPeople = styled.section`
  padding: 0 7px 6px 0;
  background: #f2f3f5;
`;

const PeopleBar = styled.div`
  display: flex;
  align-items: center;
  gap: 11px;
  height: 34px;
  padding: 0 4px 2px 19px;
`;

const PeopleName = styled.span`
  margin-right: auto;
  padding-top: 2px;
  font-size: 12px;
  color: #000;
`;

const Avatar = styled.span`
  margin-right: 3px;
  border: 1px solid #8a8a8a;
  background: linear-gradient(#ccc, #e2e2e2);
`;

const PeopleContent = styled.div`
  display: flex;
  height: 34px;
  overflow: hidden;
`;

const PhotoColumn = styled.div`
  width: 146px;
  padding: 2px 0 0 25px;
`;

const Photo = styled.div`
  width: 102px;
  padding: 2px;
  border: 1px solid #777;
  background: radial-gradient(circle at 50% 40px, #f2f2f2, #d2d2d2 60px);
  box-shadow: inset 0 0 0 2px #fff;
`;

const PeopleTabs = styled.div`
  width: 106px;
`;

const PeopleTab = styled.button`
  display: flex;
  align-items: center;
  gap: 5px;
  width: 100%;
  height: 22px;
  padding-left: 5px;
  font-size: 12px;
  color: #000;
  background: #fff;
  border-left: 1px solid #b5b9c0;

  ${({ $active }) =>
    $active &&
    `
    height: 26px;
    border: solid #b5b9c0;
    border-width: 0 1px 1px 0;
    background: #f2f3f5;
  `}
`;

const PeopleItems = styled.div`
  flex: 1;
  border-top: 1px solid #b5b9c0;
  background: #fff;
  text-align: center;
  color: #222;
`;

const PeopleScroll = styled.div`
  display: flex;
  flex-direction: column;
  align-items: center;
  justify-content: space-evenly;
  width: 16px;
  border-top: 1px solid #b5b9c0;
  background: #f1f1f2;
`;

const StyledTaskbar = styled.footer`
  display: flex;
  align-items: stretch;
  height: 40px;
  border-top: 1px solid #34414f;
  background: linear-gradient(90deg, #8197b3, #8399b5 60px, #a3bddc 130px);
  box-shadow: inset 0 1px 0 #c3d4e8;
`;

const StartButton = styled.button`
  padding: 0 6px 0 8px;
`;

const TaskButton = styled.button`
  display: flex;
  align-items: center;
  justify-content: center;
  width: 58px;
  margin-right: 3px;

  ${({ $open }) =>
    $open &&
    `
    border: 1px solid #41546e;
    border-top: 0;
    border-radius: 3px;
    background: linear-gradient(135deg, #d7e4f3, #aac3e0);
    box-shadow: inset 0 0 0 1px #dde9f6;
  `}

  &:nth-child(2) {
    margin: 0 4px 0 8px;
  }

  ${({ $active }) =>
    $active &&
    `
    width: 52px;
    margin: 0;
    background: linear-gradient(135deg, #f5f9fd, #cbdcef);
  `}
`;

const TaskStack = styled.div`
  display: flex;
  margin-right: 4px;
  padding-right: 6px;
  border-right: 1px solid #5d7593;
  border-radius: 3px;
  background: #bcd0e8;
`;

const Tray = styled.div`
  display: flex;
  align-items: center;
  gap: 7px;
  margin-left: auto;
  padding: 0 5px 0 36px;
  background: linear-gradient(90deg, #a3bddc, #8395ae 32px);
`;

const Clock = styled.div`
  display: flex;
  flex-direction: column;
  align-items: center;
  width: 73px;
  margin-left: 3px;
  line-height: 17px;
  color: #fff;
`;

const ShowDesktop = styled.button`
  width: 14px;
  border: 1px solid #3c4a5c;
  background: linear-gradient(#6d7f95, #4e6078 45%, #8195af);
  box-shadow: inset 1px 1px 0 #a9b9cc;
`;
